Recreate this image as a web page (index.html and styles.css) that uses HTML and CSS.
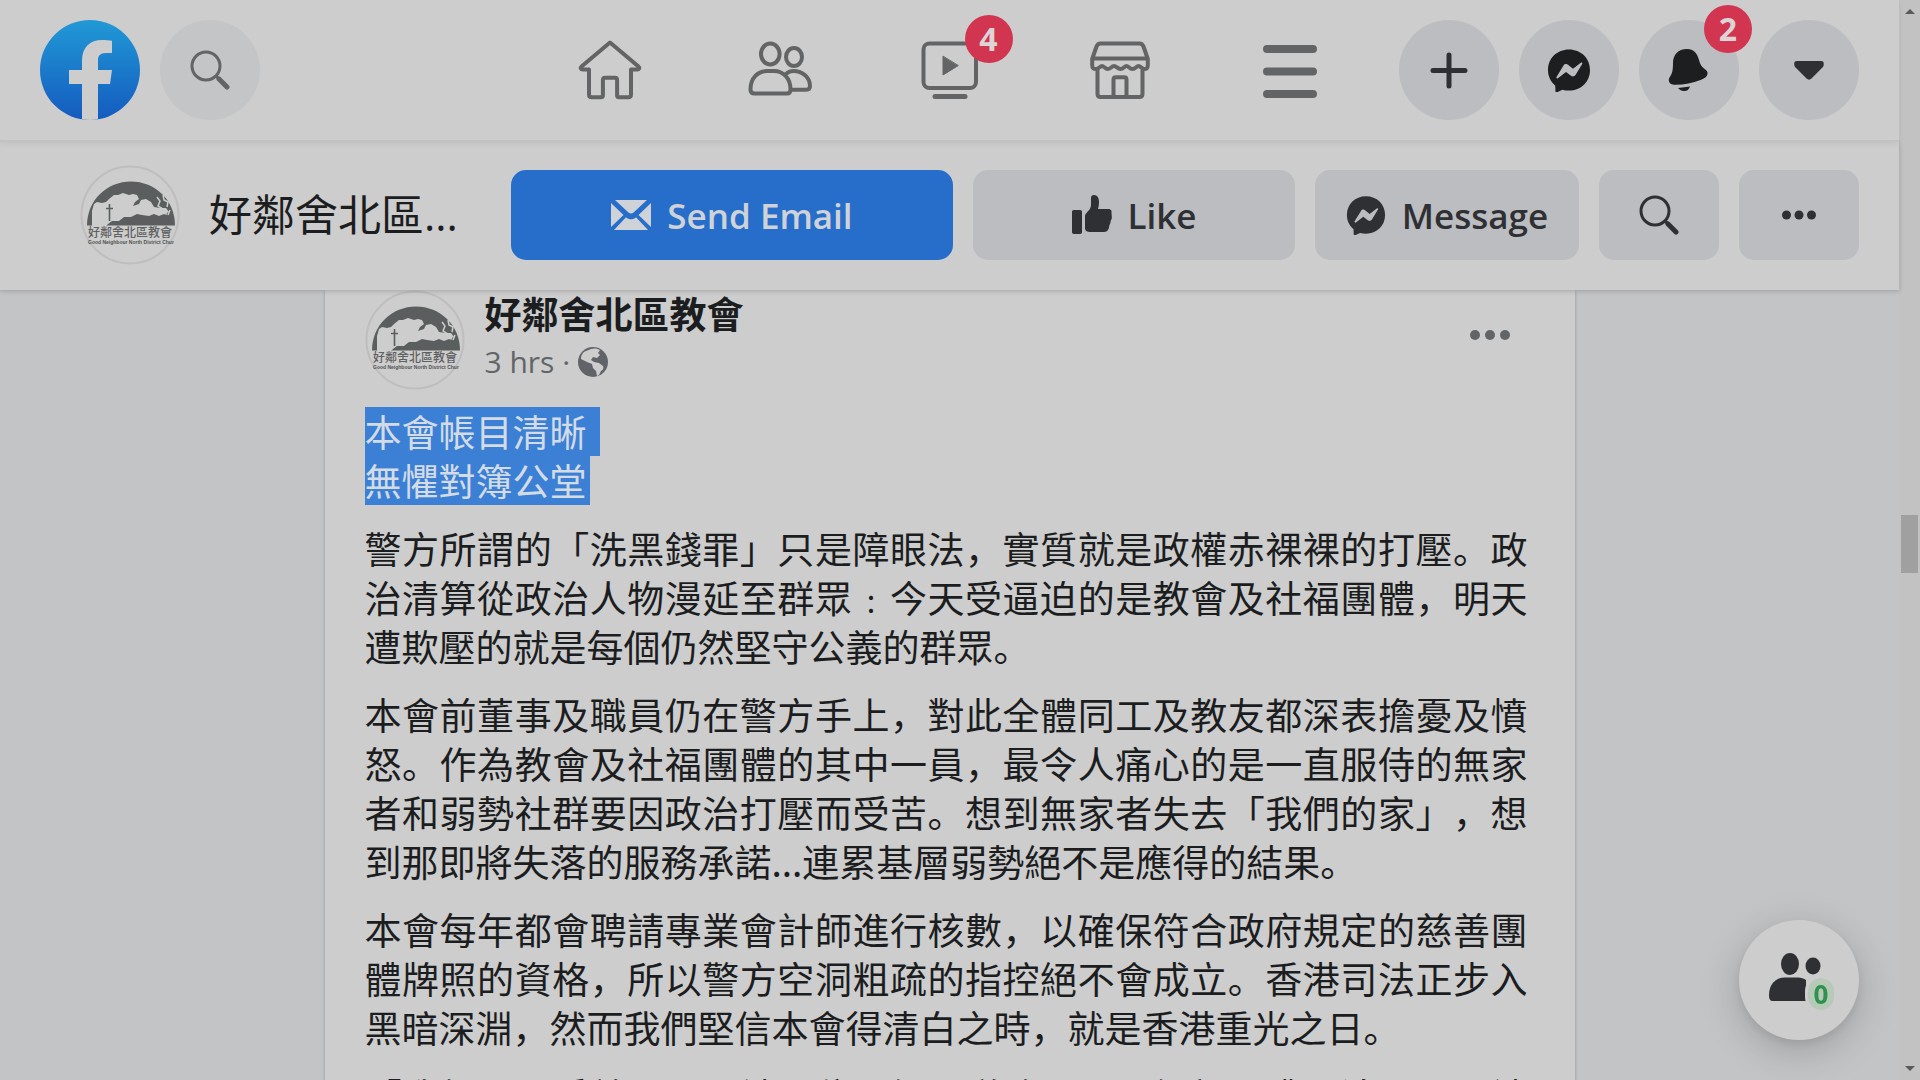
FILE: index.html
```html
<!DOCTYPE html>
<html lang="zh-Hans">
<head>
    <meta charset="UTF-8">
    <meta name="viewport" content="width=device-width, initial-scale=1.0">
    <title>好鄰舍北區教會</title>
    <link rel="stylesheet" href="styles.css">
</head>
<body>
    <!-- Shared drawings -->
    <svg class="defs" aria-hidden="true">
        <symbol id="church" viewBox="0 0 100 100">
            <circle cx="50" cy="50" r="48.5" fill="none" stroke="#bebebe" stroke-width="2"/>
            <path fill="#5b5e5e" d="M7 60.500C7 35 27 16.500 51 16.500S95 35 95 60.500z"/>
            <path fill="#cdcdcd" d="M14 39l3-2 5 1 4-1 3-3 5-4 4 0 5-2 6 2 4-1 4 1 2 4-4 3-2 4 6-2 2-4 5-1 5 3 3 5 6 1 6 0 3 4-5 2-5 2-5-2-5 2-7-1-5-1-6 3-7 0-5 4-7 0-4 3-2 2h-14V46z"/>
            <path stroke="#5b5e5e" stroke-width="1.600" fill="none" d="M29.500 39v17M26 43.500h7"/>
            <path stroke="#cdcdcd" stroke-width="1.500" fill="none" d="M77 32l3 4-2 5 5 3-1 4 5 1M83 30l1 5 4 2-1 5M90 45l-2 5"/>
            <text class="church-name" x="8" y="72">好鄰舍北區教會</text>
            <text class="church-sub" x="8" y="79">Good Neighbour North District Chur</text>
        </symbol>
        <symbol id="messenger" viewBox="0 0 44 44">
            <path fill="currentColor" d="M22 1.500C10 1.500 1 10.300 1 22c0 6.500 2.800 11.800 7.200 15.500l.3 6c0 .8.800 1.200 1.500.8l5.500-2.600c2 .6 4.200.9 6.500.9 12 0 21-8.900 21-20.600S34 1.500 22 1.500z"/>
            <path fill="#bbbdc0" d="M9.500 29l7-11.500c1-1.500 3-1.900 4.500-.8l5 4.100 7.800-6c.9-.6 2 .3 1.400 1.200L28.500 27c-1 1.500-3 1.900-4.500.8l-5-3.900-8.100 6.300c-.9.600-2-.3-1.400-1.200z"/>
        </symbol>
        <symbol id="search" viewBox="0 0 40 40">
            <circle cx="16" cy="16" r="14" fill="none" stroke="currentColor" stroke-width="3"/>
            <path d="M26 26l3 3" stroke="currentColor" stroke-width="3"/>
            <path d="M29 29l8 8" stroke="currentColor" stroke-width="5" stroke-linecap="round"/>
        </symbol>
    </svg>

    <div class="page">
        <header class="topbar">
            <div class="topbar-left">
                <a href="#" aria-label="Facebook">
                    <svg class="logo" viewBox="0 0 100 100">
                        <defs>
                            <linearGradient id="blue" x1="0" y1="0" x2="0" y2="1">
                                <stop offset="0" stop-color="#2199d6"/>
                                <stop offset="1" stop-color="#145bbf"/>
                            </linearGradient>
                            <clipPath id="disc"><circle cx="50" cy="50" r="50"/></clipPath>
                        </defs>
                        <circle cx="50" cy="50" r="50" fill="url(#blue)"/>
                        <path clip-path="url(#disc)" fill="#cdcdcd" d="M42 101V64H29V50h13V41c0-14 8-21 20-21 4 0 7 .3 10 .8V33h-6c-6 0-8 3-8 7v10h14l-2 14H58v37z"/>
                    </svg>
                </a>
                <button class="round pale" aria-label="Search Facebook"><svg class="icon-40"><use href="#search"/></svg></button>
            </div>

            <nav class="tabs">
                <a href="#" aria-label="Home">
                    <svg viewBox="0 0 64 64"><path d="M32 4.500 3.500 28.500c-1.500 1.300-.8 3 .8 3H11v25c0 1.800 1 2.700 2.700 2.700h9.500c1 0 1.700-.7 1.700-1.700V42c0-1.500.8-2.300 2.300-2.300h9.600c1.500 0 2.300.8 2.300 2.300v15.500c0 1 .7 1.700 1.700 1.700h9.500c1.800 0 2.700-1 2.700-2.700v-25h6.700c1.600 0 2.300-1.700.8-3z"/></svg>
                </a>
                <a href="#" aria-label="Friends">
                    <svg viewBox="0 0 64 64"><ellipse cx="22.300" cy="16" rx="9.300" ry="10.500"/><ellipse cx="46" cy="19" rx="8" ry="9"/><path d="M6.500 55.500h32.500c2.500 0 3.500-1.500 3.500-4C42.500 40 35 33 26 33h-7C10 33 2.500 40 2.500 51.500c0 2.500 1 4 4 4zM38.500 35.500c2-1.800 4.500-2.500 7-2.500 9 0 16.500 6.500 16.500 15 0 2.500-1 3.700-3.500 3.700H43"/></svg>
                </a>
                <a href="#" aria-label="Watch, 4 new">
                    <svg viewBox="0 0 64 64"><rect x="5.500" y="5.500" width="52.500" height="44.500" rx="6"/><path class="solid" d="M25 18.500v18.500l15-9.300z"/><path d="M17 58.500h30" stroke-width="5"/></svg>
                    <span class="badge">4</span>
                </a>
                <a href="#" aria-label="Marketplace">
                    <svg viewBox="0 0 64 64"><path d="M12.500 5.500h39c2 0 3.200 1 4 3l4.300 12.500v6c0 3-1 4-3.300 4-2.500 0-4-3-6-3s-3 3-6 3-4-3-6-3-3 3-6 3-4-3-6.500-3-3 3-6 3-4-3-6-3-3 3-6 3-3.800-1-3.800-4v-6L8.500 8.500c.8-2 2-3 4-3zM4.500 20.500h55M9.500 31v25c0 2 1 3 3 3h39c2 0 3-1 3-3V31M25.500 59V41.500c0-1.500.8-2.300 2.300-2.300h8.400c1.500 0 2.300.8 2.300 2.300V59"/></svg>
                </a>
                <a href="#" aria-label="More">
                    <svg viewBox="0 0 64 64"><path d="M9 11h46M9 33.500h46M9 56h46" stroke-width="8"/></svg>
                </a>
            </nav>

            <div class="topbar-right">
                <button class="round" aria-label="Create"><svg class="icon-44" viewBox="0 0 44 44"><path d="M22 7v31M6 22.500h32" stroke="currentColor" stroke-width="5" stroke-linecap="round"/></svg></button>
                <button class="round dark" aria-label="Messenger"><svg class="icon-44"><use href="#messenger"/></svg></button>
                <button class="round dark" aria-label="Notifications">
                    <svg class="icon-44" viewBox="0 0 44 44"><path fill="currentColor" d="M20 1c-9 0-14 6-14 14-.1 7-.5 9-2 12-1.500 2.500-2.700 4-2 6.500.8 2.300 2.500 3.200 6.500 3.200 9 0 17-1.700 25-4.700 4-1.500 6.500-3 7-6 .4-2.500-1-4-3.500-5.500-3-2-4-5-5-8.500C30 5 27 1 20 1zM11 40l12-1.500c-1 3-3 4.500-5.500 4.500-2.500.3-4.500-1-6.500-3z"/></svg>
                    <span class="badge">2</span>
                </button>
                <button class="round" aria-label="Account"><svg class="icon-44" viewBox="0 0 44 44"><path fill="currentColor" d="M10 13h24c2.500 0 3 1.500 2.700 4 0 1-.7 2-1.500 2.800L24.500 30.500c-1.500 1.500-3.500 1.500-5 0L8.800 19.800C8 19 7.300 18 7.300 17c-.3-2.500.2-4 2.700-4z"/></svg></button>
            </div>
        </header>

        <div class="pagebar">
            <a class="pagebar-name" href="#">
                <svg class="avatar"><use href="#church"/></svg>
                <span>好鄰舍北區...</span>
            </a>
            <div class="actions">
                <button class="action primary">
                    <svg class="icon-40" viewBox="0 0 40 40"><path fill="currentColor" d="M4 5h32L22.500 17.500c-1.500 1.400-3.500 1.400-5 0zM0 8l12.500 12L0 32zM40 8v24L27.500 20zM15 22.300c3 2.700 7 2.700 10 0L37 35H3z"/></svg>
                    Send Email
                </button>
                <button class="action">
                    <svg class="icon-40" viewBox="0 0 40 40"><path fill="currentColor" d="M2 15h6c1.300 0 2 .7 2 2v20c0 1.300-.7 2-2 2H2c-1.300 0-2-.7-2-2V17c0-1.300.7-2 2-2zM22 0c3.500 0 5 3 5 7 0 3-.5 5-1 7h10c3 0 4 2 3.500 4 0 2 .5 3 .3 5-.2 2-1.300 2.500-1.300 4 0 2-1 2.500-1.300 4-.2 2.500-1.200 6-5.200 6H19c-4 0-6-1-6-4V21c0-3 6-6 6-11V3c0-2 1-3 3-3z"/></svg>
                    Like
                </button>
                <button class="action">
                    <svg class="icon-40"><use href="#messenger"/></svg>
                    Message
                </button>
                <button class="action" aria-label="Search this page"><svg class="icon-40"><use href="#search"/></svg></button>
                <button class="action" aria-label="More actions"><svg class="icon-40" viewBox="0 0 40 40" fill="currentColor"><circle cx="7.500" cy="20" r="4.500"/><circle cx="20" cy="20" r="4.500"/><circle cx="32.500" cy="20" r="4.500"/></svg></button>
            </div>
        </div>

        <main class="feed">
            <article class="post">
                <div class="post-head">
                    <svg class="avatar"><use href="#church"/></svg>
                    <div class="post-info">
                        <h2>好鄰舍北區教會</h2>
                        <div class="post-time">
                            3 hrs ·
                            <svg class="globe" viewBox="0 0 30 30"><circle cx="15" cy="15" r="15" fill="#606468"/><path fill="#cdcdcd" d="M13 2c3-1 7-.5 9 1l-2 3 2 2-3 3-4-1-2 3 3 2 5 1 4 3c1 2 0 4-2 5l-2 4-2 1-1-5-3-3-1-4-5-2-6-3c0-4 2-7 5-8z"/></svg>
                        </div>
                    </div>
                    <button class="more" aria-label="Post options"><svg viewBox="0 0 40 10"><circle cx="5" cy="5" r="5"/><circle cx="20" cy="5" r="5"/><circle cx="35" cy="5" r="5"/></svg></button>
                </div>
                <div class="post-text">
                    <p class="selected"><span class="line-break">本會帳目清晰</span><span>無懼對簿公堂</span></p>
                    <p>警方所謂的「洗黑錢罪」只是障眼法，實質就是政權赤裸裸的打壓。政治清算從政治人物漫延至群眾﹕今天受逼迫的是教會及社福團體，明天遭欺壓的就是每個仍然堅守公義的群眾。</p>
                    <p>本會前董事及職員仍在警方手上，對此全體同工及教友都深表擔憂及憤怒。作為教會及社福團體的其中一員，最令人痛心的是一直服侍的無家者和弱勢社群要因政治打壓而受苦。想到無家者失去「我們的家」，想到那即將失落的服務承諾...連累基層弱勢絕不是應得的結果。</p>
                    <p>本會每年都會聘請專業會計師進行核數，以確保符合政府規定的慈善團體牌照的資格，所以警方空洞粗疏的指控絕不會成立。香港司法正步入黑暗深淵，然而我們堅信本會得清白之時，就是香港重光之日。</p>
                    <p>「我們四面受敵，卻不被困住；絕了道路，卻不絕望；遭逼迫，卻不被丟棄。」</p>
                </div>
            </article>
        </main>
    </div>

    <button class="contacts" aria-label="Contacts">
        <svg viewBox="0 0 66 56"><ellipse cx="21" cy="12" rx="9" ry="11"/><ellipse cx="44" cy="14" rx="7.500" ry="8.500"/><path d="M4 49h33V28c-3-2-6-2.500-10-2.500H16C6 25.500 0 33 0 43c0 4 1 6 4 6z"/></svg>
        <span>0</span>
    </button>

    <div class="scrollbar" aria-hidden="true">
        <i class="up"></i>
        <i class="thumb"></i>
        <i class="down"></i>
    </div>
</body>
</html>
```
FILE: styles.css
```css
* {
    box-sizing: border-box;
}

body {
    margin: 0;
    height: 100vh;
    overflow: hidden;
    display: flex;
    background: #c3c4c6;
    color: #1c1d1f;
    font-family: "Open Sans", "Noto Sans CJK SC", sans-serif;
}

a {
    color: inherit;
    text-decoration: none;
}

button {
    padding: 0;
    border: 0;
    font: inherit;
    color: #2f3034;
    cursor: pointer;
}

svg {
    display: block;
    flex: none;
}

.defs {
    position: absolute;
    width: 0;
    height: 0;
}

.page {
    flex: 1;
    min-width: 0;
}

.icon-40 {
    width: 40px;
    height: 40px;
}

.icon-44 {
    width: 44px;
    height: 44px;
}

/* Top bar */
.topbar {
    position: relative;
    z-index: 2;
    display: grid;
    grid-template-columns: 1fr auto 1fr;
    align-items: center;
    padding: 20px 40px;
    background: #cdcdcd;
    border-bottom: 2px solid #c2c2c2;
    box-shadow: 0 2px 6px rgba(0, 0, 0, 0.06);
}

.topbar-left,
.topbar-right {
    display: flex;
    gap: 20px;
}

.topbar-right {
    justify-content: flex-end;
}

.logo,
.avatar {
    width: 100px;
    height: 100px;
}

.round {
    position: relative;
    display: flex;
    align-items: center;
    justify-content: center;
    width: 100px;
    height: 100px;
    border-radius: 50%;
    background: #bbbdc0;
}

.round.pale {
    background: #c3c5c7;
    color: #626466;
}

.round.dark {
    color: #1d1e1f;
}

.tabs {
    display: flex;
}

.tabs a {
    position: relative;
    display: flex;
    justify-content: center;
    width: 170px;
}

.tabs svg {
    width: 64px;
    height: 64px;
    fill: none;
    stroke: #626466;
    stroke-width: 4;
    stroke-linecap: round;
    stroke-linejoin: round;
}

.tabs .solid {
    fill: #626466;
    stroke-width: 1;
}

.badge {
    position: absolute;
    top: -15px;
    right: -13px;
    width: 48px;
    height: 48px;
    border-radius: 50%;
    background: #d1354f;
    color: #dcd4d5;
    font-size: 32px;
    font-weight: 700;
    line-height: 48px;
    text-align: center;
}

.tabs .badge {
    right: 22px;
    top: -23px;
}

/* Page bar with the action buttons */
.pagebar {
    position: relative;
    z-index: 1;
    display: flex;
    align-items: center;
    padding: 23px 40px 25px 80px;
    background: #cdcdcd;
    box-shadow: 0 1px 5px rgba(0, 0, 0, 0.2);
}

.pagebar-name {
    display: flex;
    align-items: center;
    gap: 29px;
    width: 431px;
    font-size: 43px;
    line-height: 60px;
    white-space: nowrap;
}

.actions {
    flex: 1;
    display: grid;
    grid-template-columns: 442fr 322fr 264fr 120px 120px;
    gap: 20px;
}

.action {
    display: flex;
    align-items: center;
    justify-content: center;
    gap: 16px;
    height: 90px;
    border-radius: 15px;
    background: #bbbdc0;
    color: #2f3034;
    font-size: 35px;
    font-weight: 600;
    white-space: nowrap;
}

.action.primary {
    background: #276ecb;
    color: #cfd3d8;
}

.church-name {
    font-family: "Noto Sans CJK SC", sans-serif;
    font-size: 12px;
    font-weight: 500;
    fill: #5f6161;
}

.church-sub {
    font-family: "Liberation Sans", sans-serif;
    font-size: 5px;
    font-weight: 700;
    fill: #505252;
}

/* Feed */
.post {
    max-width: 1250px;
    margin: 0 auto;
    padding: 0 40px;
    background: #cdcdcd;
    box-shadow: 0 1px 3px rgba(0, 0, 0, 0.25);
}

.post-head {
    display: flex;
    gap: 20px;
    height: 117px;
}

.post-info {
    flex: 1;
}

.post-info h2 {
    margin: 0;
    font-size: 37px;
    line-height: 49px;
}

.post-time {
    display: flex;
    align-items: center;
    gap: 8px;
    color: #626568;
    font-size: 30px;
    line-height: 46px;
}

.globe {
    width: 30px;
    height: 30px;
}

.more {
    align-self: flex-start;
    margin: 40px 25px 0 0;
    background: none;
}

.more svg {
    width: 40px;
    height: 10px;
    fill: #626568;
}

.post-text {
    padding-right: 7px;
    font-family: "Noto Sans CJK SC", sans-serif;
    font-size: 37px;
    line-height: 49px;
    text-align: justify;
    text-spacing-trim: space-all;
}

.post-text p {
    margin: 0 0 19px;
}

.selected span {
    display: block;
    width: fit-content;
    padding-right: 3px;
    background: #3b80d5;
    color: #d3dbe5;
}

.selected .line-break {
    padding-right: 13px;
}

/* Contacts bubble */
.contacts {
    position: fixed;
    right: 61px;
    bottom: 40px;
    z-index: 3;
    display: flex;
    align-items: center;
    justify-content: center;
    width: 120px;
    height: 120px;
    padding-left: 6px;
    border-radius: 50%;
    background: #cdcdcd;
    box-shadow: 0 10px 40px rgba(0, 0, 0, 0.2), 0 4px 10px rgba(0, 0, 0, 0.08);
}

.contacts svg {
    width: 66px;
    height: 56px;
    fill: #2f3034;
}

.contacts span {
    position: absolute;
    right: 25px;
    bottom: 30px;
    width: 26px;
    height: 32px;
    border-radius: 13px;
    background: #b7c9b7;
    outline: 3px solid #cdcdcd;
    color: #2f9350;
    font-size: 26px;
    font-weight: 700;
    line-height: 32px;
    text-align: center;
}

/* Scrollbar */
.scrollbar {
    display: flex;
    flex-direction: column;
    align-items: center;
    width: 21px;
    padding: 9px 0;
    background: #c2c2c2;
}

.scrollbar .up,
.scrollbar .down {
    border: 5px solid transparent;
}

.scrollbar .up {
    margin-bottom: 8px;
    border-top: 0;
    border-bottom-color: #5a5a5a;
}

.scrollbar .down {
    border-bottom: 0;
    border-top-color: #5a5a5a;
}

.scrollbar .thumb {
    width: 17px;
    height: 58px;
    margin: auto 0;
    background: #a0a0a0;
}
```
